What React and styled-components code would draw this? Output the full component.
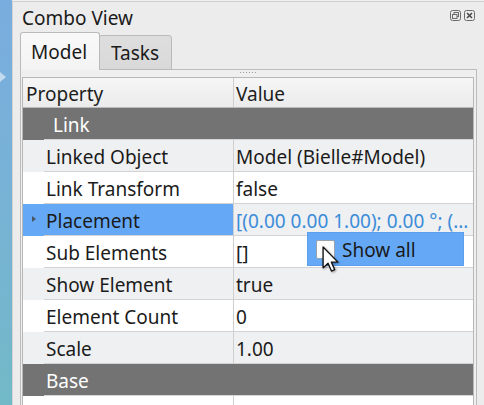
import React from "react";
import styled, { createGlobalStyle } from "styled-components";

const Global = createGlobalStyle`
  html, body { margin: 0; padding: 0; }
  body {
    background: #efefef;
    font-family: "Noto Sans", "Open Sans", sans-serif;
    font-size: 19px;
    color: #1b1b1b;
    overflow: hidden;
  }
  * { box-sizing: border-box; }
`;

const Root = styled.div`
  display: grid;
  grid-template-columns: 12px 1fr;
  width: 484px;
  height: 405px;
  overflow: hidden;
`;

const SideStrip = styled.div`
  position: relative;
  background: linear-gradient(180deg, #7aaddf 0%, #77b3d4 55%, #72b9c7 100%);
`;

const StripArrow = styled.div`
  position: absolute;
  left: 0;
  top: 72px;
  width: 0;
  height: 0;
  border-top: 5px solid transparent;
  border-bottom: 5px solid transparent;
  border-left: 6px solid rgba(255, 255, 255, 0.55);
`;

const Dock = styled.div`
  display: flex;
  flex-direction: column;
  margin-top: 1px;
  border-top: 1px solid #cfcfcf;
  border-left: 1px solid #d2d2d2;
  background: #ececec;
  padding: 0 7px 0 7px;
  overflow: hidden;
  & > * { flex-shrink: 0; }
`;

const TitleBar = styled.div`
  display: flex;
  align-items: center;
  justify-content: space-between;
  height: 30px;
  padding: 0 2px 0 2px;
`;

const Title = styled.span`
  line-height: 1;
  padding-top: 2px;
  color: #1a1a1a;
`;

const TitleIcons = styled.div`
  display: flex;
  gap: 3px;
  margin-bottom: 4px;
`;

const TabBar = styled.div`
  display: flex;
  align-items: flex-end;
  height: 38px;
  position: relative;
  z-index: 1;
  margin-bottom: -1px;
`;

const Tab = styled.div`
  display: flex;
  align-items: center;
  height: ${(p) => (p.$active ? 38 : 35)}px;
  padding: 0 0 0 ${(p) => (p.$active ? 10 : 11)}px;
  border: 1px solid #bababa;
  border-bottom: ${(p) => (p.$active ? "none" : "1px solid #bababa")};
  border-radius: 3px 3px 0 0;
  margin-left: ${(p) => (p.$active ? 0 : -1)}px;
  background: ${(p) =>
    p.$active
      ? "linear-gradient(180deg, #f9f9f9 0%, #f3f3f3 100%)"
      : "linear-gradient(180deg, #dedede 0%, #d9d9d9 100%)"};
  color: #1a1a1a;
  width: ${(p) => p.$w}px;
`;

const Pane = styled.div`
  display: flex;
  flex-direction: column;
  border: 1px solid #bcbcbc;
  border-bottom: none;
  padding: 0 2px 0 1px;
  background: #efefef;
`;

const Handle = styled.div`
  height: 7px;
  display: flex;
  justify-content: center;
  padding-top: 2px;
`;

const Dots = styled.div`
  width: 17px;
  height: 1px;
  background: repeating-linear-gradient(90deg, #9a9a9a 0 1px, transparent 1px 3px);
`;

const Table = styled.div`
  position: relative;
  border: 1px solid #b7b7b7;
  border-bottom: none;
  background: #ffffff;
`;

const Header = styled.div`
  display: grid;
  grid-template-columns: 211px 1fr;
  height: 30px;
  background: linear-gradient(180deg, #f6f6f6 0%, #ebebeb 100%);
  border-bottom: 1px solid #b9b9b9;
`;

const HeadCell = styled.div`
  display: flex;
  align-items: center;
  padding: 2px 0 0 ${(p) => p.$pad}px;
  border-right: ${(p) => (p.$divider ? "1px solid #cdcdcd" : "none")};
  color: #1d1d1d;
`;

const Row = styled.div`
  display: grid;
  grid-template-columns: 21px 190px 1fr;
  height: 32px;
  background: ${(p) => (p.$alt ? "#eff0f1" : "#ffffff")};
`;

const Indent = styled.div`
  position: relative;
  background: ${(p) => (p.$selected ? "#65a9f6" : "transparent")};
`;

const Expander = styled.div`
  position: absolute;
  left: 9px;
  top: 12px;
  width: 0;
  height: 0;
  border-top: 3.5px solid transparent;
  border-bottom: 3.5px solid transparent;
  border-left: 4px solid #4b5663;
`;

const PropCell = styled.div`
  display: flex;
  align-items: center;
  padding: 2px 0 0 2px;
  border-right: 1px solid #cfcfcf;
  border-bottom: 1px solid #d3d3d3;
  background: ${(p) => (p.$selected ? "#65a9f6" : "transparent")};
  white-space: nowrap;
  overflow: hidden;
`;

const ValueCell = styled.div`
  display: flex;
  align-items: center;
  padding: 2px 0 0 2px;
  border-bottom: 1px solid #d3d3d3;
  color: ${(p) => (p.$link ? "#3b8cd9" : "#1b1b1b")};
  white-space: nowrap;
  overflow: hidden;
`;

const GroupRow = styled.div`
  display: grid;
  grid-template-columns: 21px 1fr;
  height: 32px;
  background: #737373;
`;

const GroupLabel = styled.div`
  display: flex;
  align-items: center;
  padding: 2px 0 0 ${(p) => p.$pad}px;
  border-bottom: 1px solid #d6d6d6;
  color: #ffffff;
`;

const Popup = styled.div`
  position: absolute;
  left: 284px;
  top: 154px;
  width: 157px;
  height: 34px;
  display: flex;
  align-items: center;
  gap: 7px;
  padding: 1px 0 0 8px;
  background: #65a9f6;
  border: 1px solid #5d9fea;
  color: #1a1a1a;
`;

const CheckBox = styled.div`
  width: 19px;
  height: 19px;
  margin-top: -1px;
  background: #fcfcfc;
  border: 1px solid #9aa3ad;
  border-radius: 2px;
`;

const Cursor = styled.svg`
  position: absolute;
  left: 299px;
  top: 168px;
  filter: drop-shadow(1px 1px 1px rgba(0, 0, 0, 0.35));
`;

const rows = [
  { group: true, label: "Link", pad: 9 },
  { label: "Linked Object", value: "Model (Bielle#Model)", alt: true },
  { label: "Link Transform", value: "false" },
  {
    label: "Placement",
    value: "[(0.00 0.00 1.00); 0.00 °; (...",
    alt: true,
    selected: true,
    link: true,
    expandable: true,
  },
  { label: "Sub Elements", value: "[]" },
  { label: "Show Element", value: "true", alt: true },
  { label: "Element Count", value: "0" },
  { label: "Scale", value: "1.00", alt: true },
  { group: true, label: "Base", pad: 2 },
  { label: "", value: "" },
];

function FloatIcon() {
  return (
    <svg width="11" height="11" viewBox="0 0 11 11">
      <rect x="0.5" y="0.5" width="10" height="10" rx="2" fill="none" stroke="#6a6a6a" />
      <rect x="4" y="2.5" width="4.5" height="4" fill="none" stroke="#6a6a6a" />
      <rect x="2.5" y="4.5" width="4.5" height="4" fill="#ececec" stroke="#6a6a6a" />
    </svg>
  );
}

function CloseIcon() {
  return (
    <svg width="11" height="11" viewBox="0 0 11 11">
      <rect x="0.5" y="0.5" width="10" height="10" rx="2" fill="none" stroke="#6a6a6a" />
      <path d="M3 3 L8 8 M8 3 L3 8" stroke="#4a4a4a" strokeWidth="1.6" />
    </svg>
  );
}

export default function App() {
  return (
    <>
      <Global />
      <Root>
        <SideStrip>
          <StripArrow />
        </SideStrip>
        <Dock>
          <TitleBar>
            <Title>Combo View</Title>
            <TitleIcons>
              <FloatIcon />
              <CloseIcon />
            </TitleIcons>
          </TitleBar>
          <TabBar>
            <Tab $active $w={80}>Model</Tab>
            <Tab $w={73}>Tasks</Tab>
          </TabBar>
          <Pane>
            <Handle>
              <Dots />
            </Handle>
            <Table>
              <Header>
                <HeadCell $pad={3} $divider>Property</HeadCell>
                <HeadCell $pad={2}>Value</HeadCell>
              </Header>
              {rows.map((r, i) =>
                r.group ? (
                  <GroupRow key={i}>
                    <div />
                    <GroupLabel $pad={r.pad}>{r.label}</GroupLabel>
                  </GroupRow>
                ) : (
                  <Row key={i} $alt={r.alt}>
                    <Indent $selected={r.selected}>
                      {r.expandable && <Expander />}
                    </Indent>
                    <PropCell $selected={r.selected}>{r.label}</PropCell>
                    <ValueCell $link={r.link}>{r.value}</ValueCell>
                  </Row>
                )
              )}
              <Popup>
                <CheckBox />
                <span>Show all</span>
              </Popup>
              <Cursor width="17" height="26" viewBox="0 0 12.5 19.5">
                <path
                  d="M0.7 0.7 L0.7 16.4 L4.4 12.9 L7 18.8 L9.4 17.8 L6.9 12.1 L11.8 12.1 Z"
                  fill="#ffffff"
                  stroke="#111111"
                  strokeWidth="1"
                  strokeLinejoin="round"
                />
              </Cursor>
            </Table>
          </Pane>
        </Dock>
      </Root>
    </>
  );
}
